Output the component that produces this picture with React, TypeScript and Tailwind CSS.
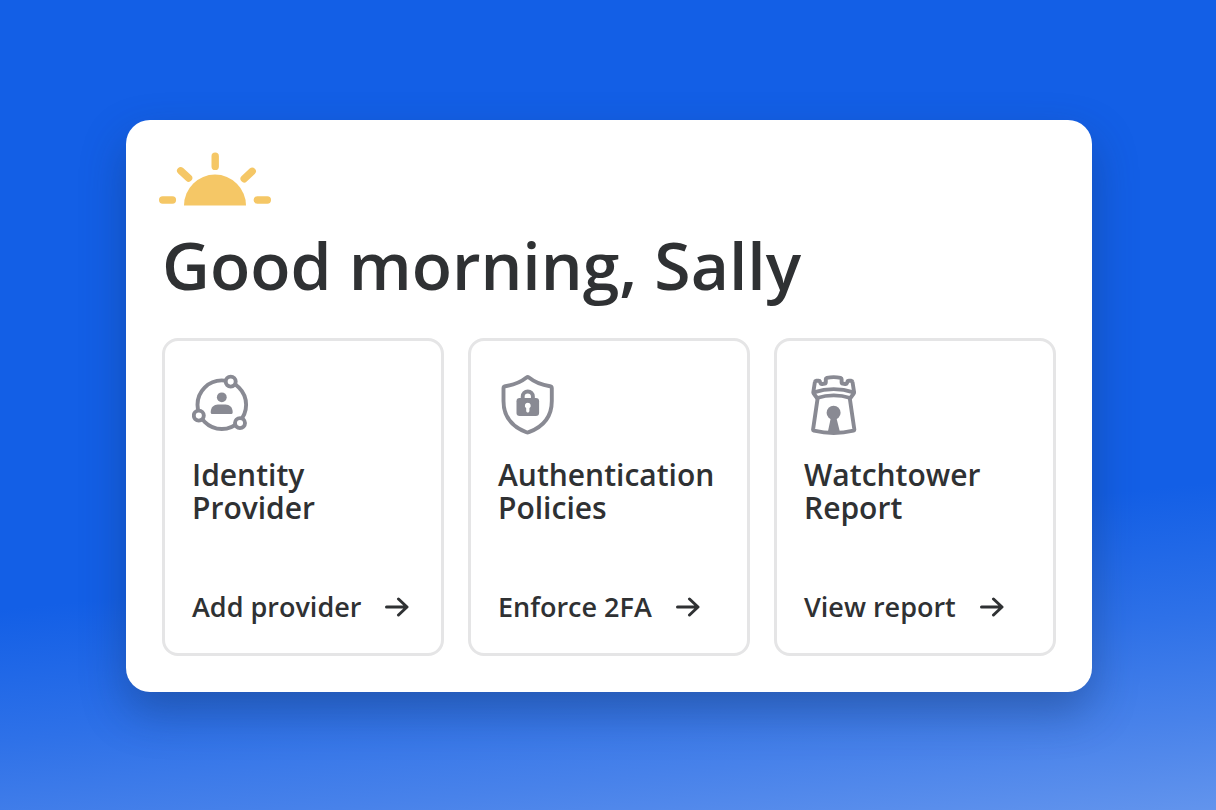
import type { ReactNode } from "react";

function SunIcon() {
  return (
    <svg viewBox="8 12 114 54" className="-ml-1 h-[54px] w-[114px] text-[#f5c766]" fill="none" stroke="currentColor" strokeWidth="7.4" strokeLinecap="round" aria-hidden="true">
      <path d="M34 65.600a31 31 0 0 1 62 0z" fill="currentColor" stroke="none" />
      <path d="M65.200 16.200v10.200M30.700 30.800l7.900 7.200M102.200 31.300l-8 7.500M12.700 60h9.700M107.300 60h10" />
    </svg>
  );
}

function IconFrame({ children }: { children: ReactNode }) {
  return (
    <svg className="h-16 w-[60px] text-[#898a93]" viewBox="10 8 60 64" fill="none" stroke="currentColor" strokeWidth="3.9" strokeLinecap="round" strokeLinejoin="round" aria-hidden="true">
      {children}
    </svg>
  );
}

function IdentityIcon() {
  return (
    <IconFrame>
      <circle cx="39.8" cy="39.7" r="24.300" />
      <g className="fill-white">
        <circle cx="48.700" cy="16.600" r="5" />
        <circle cx="16.800" cy="50.600" r="5" />
        <circle cx="58" cy="58.100" r="5" />
      </g>
      <g fill="currentColor" stroke="none">
        <circle cx="39.800" cy="32.300" r="4.900" />
        <path d="M28.700 47.200c0-4.800 3.300-7.600 7.200-7.600h7.600c3.900 0 7.200 2.800 7.200 7.600 0 1.200-.7 1.900-1.900 1.900H30.600c-1.200 0-1.900-.7-1.900-1.900z" />
      </g>
    </IconFrame>
  );
}

function ShieldIcon() {
  return (
    <IconFrame>
      <path d="M38.500 12.500c-5.800 4.700-13.200 7.500-21.200 8.700-1.100.2-1.800 1-1.800 2.100V36c0 15.600 9.200 26 22.900 31.200.8.3 1.600.3 2.400 0C54.600 62 63.800 51.600 63.800 36V23.300c0-1.100-.7-1.900-1.800-2.100-8-1.200-15.300-4-21.100-8.700-.8-.6-1.600-.6-2.400 0z" />
      <path d="M34.700 35v-3.400a5.100 5.100 0 0 1 10.200 0V35" />
      <rect x="28.500" y="33" width="22.600" height="18" rx="3.200" fill="currentColor" stroke="none" />
      <path className="fill-white" stroke="none" d="M39.800 37.700a3 3 0 0 1 1.600 5.500v2.700c0 .9-.7 1.500-1.600 1.500s-1.600-.6-1.600-1.500v-2.700a3 3 0 0 1 1.600-5.500z" />
    </IconFrame>
  );
}

function TowerIcon() {
  return (
    <IconFrame>
      <path d="M22.300 15.700c-.9.100-1.300.5-1.400 1.300L19.300 27.200c0 .5.100.9.400 1.300L23 33c11-3.400 22.400-3.400 33.400 0l3.300-4.500c.3-.4.400-.8.400-1.300L58.500 17c-.1-.8-.5-1.200-1.400-1.300l-2.300-.1c-.8 0-1.200.3-1.400 1l-.5 1.600c-.3.700-.8 1-1.500.9l-2.700-.6c-.7-.1-1.100-.6-1.100-1.300v-3.100c0-.7-.3-1.100-1-1.300a34 34 0 0 0-13.800 0c-.7.200-1 .6-1 1.300v3.100c0 .7-.4 1.200-1.100 1.300l-2.700.6c-.7.100-1.200-.2-1.500-.9l-.5-1.600c-.2-.7-.6-1-1.400-1z" />
      <path d="M19.800 27.300c13-4.200 26.800-4.200 39.800 0" />
      <path d="m23.600 33.500-4.500 30.800c-.1.600.2 1.100.8 1.300 12.700 3.100 26.900 3.100 39.600 0 .6-.2.900-.7.800-1.300L55.800 33.500" />
      <g fill="currentColor" stroke="none">
        <circle cx="39.600" cy="47.800" r="7" />
        <path d="M37 52h5.200l4 16H33.600z" />
      </g>
    </IconFrame>
  );
}

function ArrowIcon() {
  return (
    <svg viewBox="0 0 24 20" className="h-5 w-6" fill="none" stroke="currentColor" strokeWidth="3" strokeLinecap="round" strokeLinejoin="round" aria-hidden="true">
      <path d="M1.500 10h20M13.500 2l8.500 8-8.500 8" />
    </svg>
  );
}

const tasks = [
  { title: "Identity Provider", action: "Add provider", icon: <IdentityIcon /> },
  { title: "Authentication Policies", action: "Enforce 2FA", icon: <ShieldIcon /> },
  { title: "Watchtower Report", action: "View report", icon: <TowerIcon /> },
];

export default function App() {
  return (
    <div className="flex min-h-screen items-center justify-center bg-[linear-gradient(174deg,#135fe6_0%,#135fe6_65%,#2e71e8_79%,#4882ea_90%,#6294ed_100%)] pt-[2px] pl-[2px] font-['Open_Sans',sans-serif] text-[#2f3133]">
      <main className="w-full max-w-[966px] rounded-3xl bg-white px-9 pt-8 pb-9 shadow-[0_20px_44px_rgba(25,55,105,0.42)]">
        <SunIcon />
        <h1 className="mt-[18px] text-[66px] leading-[80px] font-semibold">Good morning, Sally</h1>
        <div className="mt-[34px] grid grid-cols-3 gap-6">
          {tasks.map((task) => (
            <section key={task.title} className="flex flex-col items-start rounded-2xl border-3 border-[#e5e5e6] px-[27px] pt-8 pb-7">
              {task.icon}
              <h2 className="mt-[21px] w-min text-[30px] leading-[33px] font-semibold">{task.title}</h2>
              <button type="button" className="mt-[65px] flex cursor-pointer items-center gap-6 text-[27px] leading-9 font-semibold whitespace-nowrap">
                {task.action}
                <ArrowIcon />
              </button>
            </section>
          ))}
        </div>
      </main>
    </div>
  );
}
